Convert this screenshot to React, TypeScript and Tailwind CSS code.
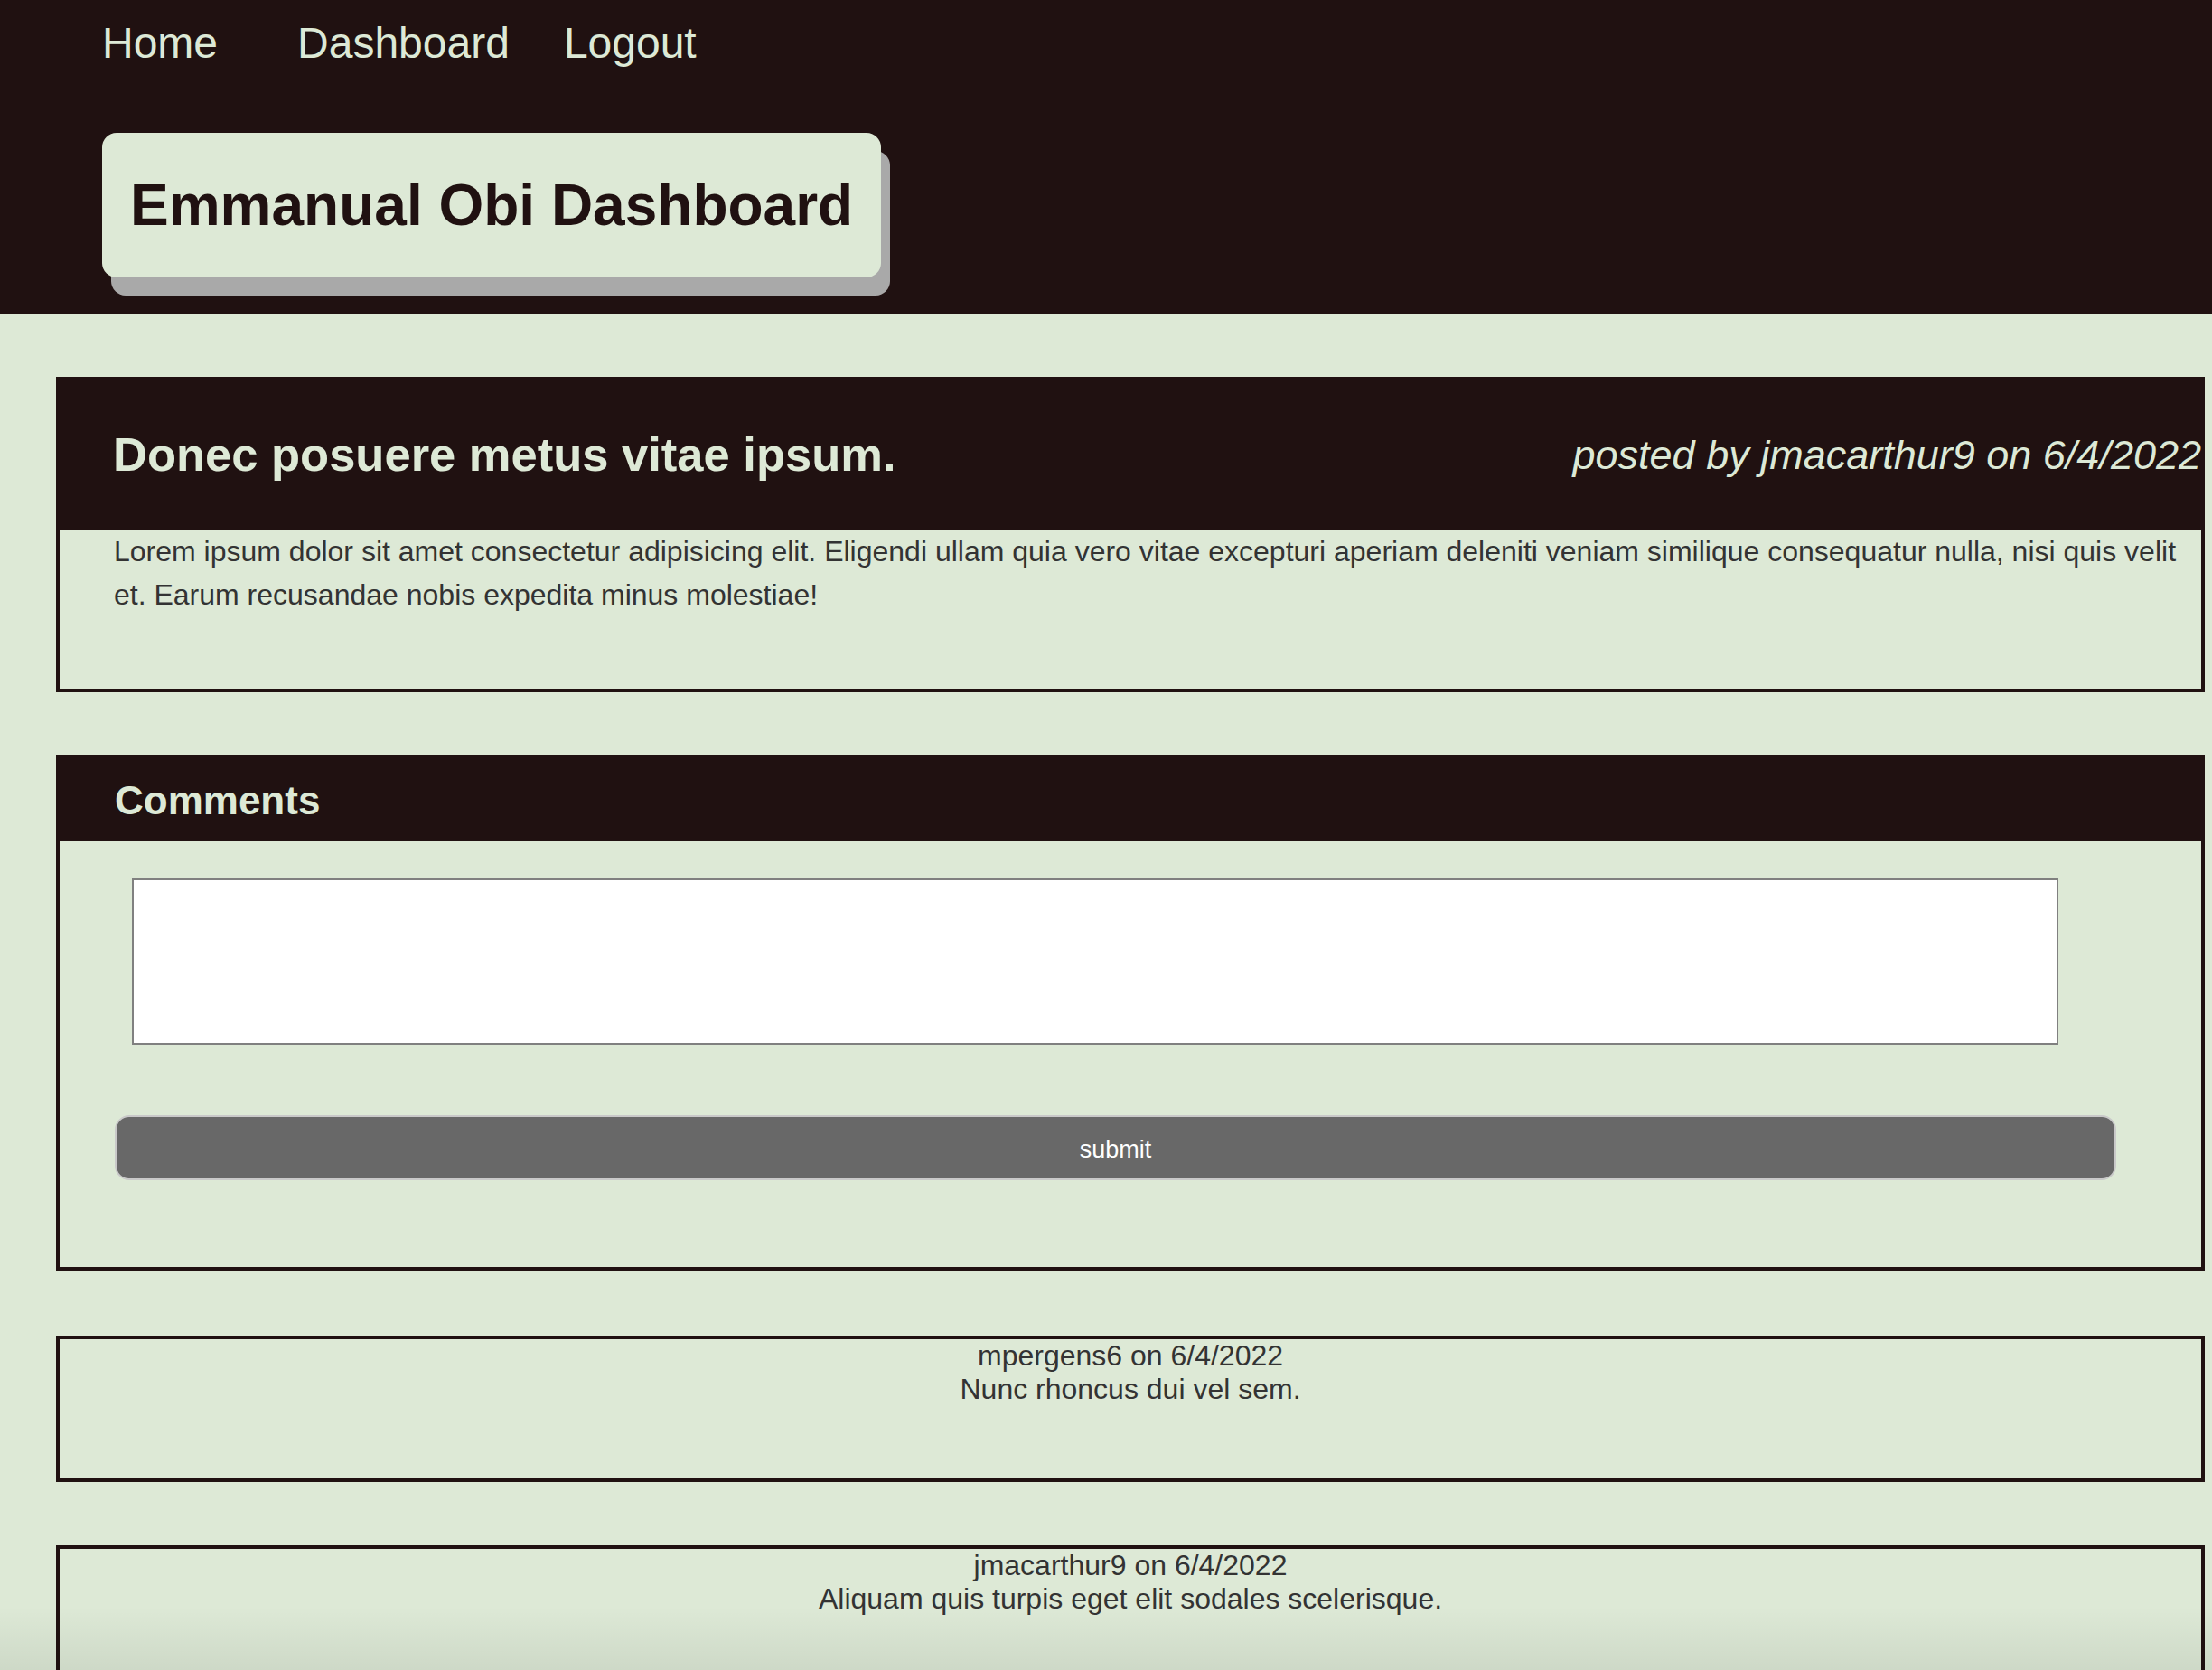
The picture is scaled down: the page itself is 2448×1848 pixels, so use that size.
export default function App() {
  return (
    <div className="relative h-[1848px] overflow-hidden bg-[#dde9d6] font-['Liberation_Sans',Arial,sans-serif]">
      <header className="h-[347px] bg-[#201111] pl-[113px] pt-[20px]">
        <nav className="flex text-[48px] leading-[55px] text-[#dde9d6]">
          <a href="#" className="mr-[88px]">
            Home
          </a>
          <a href="#" className="mr-[60px]">
            Dashboard
          </a>
          <a href="#">Logout</a>
        </nav>
        <div className="mt-[72px] flex h-[160px] w-fit items-center rounded-[16px] bg-[#dde9d6] px-[31px] shadow-[10px_20px_0_#a9a9a9]">
          <h1 className="text-[64px] font-bold leading-none text-[#201111]">
            Emmanual Obi Dashboard
          </h1>
        </div>
      </header>

      <main className="pt-[70px]">
        <section className="ml-[62px] mr-[8px] border-4 border-[#201111]">
          <div className="flex h-[165px] items-center justify-between bg-[#201111] pl-[59px] text-[#dde9d6]">
            <h2 className="text-[52.5px] font-bold leading-none">
              Donec posuere metus vitae ipsum.
            </h2>
            <p className="text-[45px] italic leading-none">
              posted by jmacarthur9 on 6/4/2022
            </p>
          </div>
          <p className="pb-[80px] pl-[60px] pr-[20px] text-[32px] leading-[48px] text-[#333]">
            Lorem ipsum dolor sit amet consectetur adipisicing elit. Eligendi
            ullam quia vero vitae excepturi aperiam deleniti veniam similique
            consequatur nulla, nisi quis velit et. Earum recusandae nobis
            expedita minus molestiae!
          </p>
        </section>

        <section className="ml-[62px] mr-[8px] mt-[70px] border-4 border-[#201111]">
          <div className="flex h-[91px] items-center bg-[#201111] pl-[61px]">
            <h3 className="text-[44px] font-bold leading-none text-[#dde9d6]">
              Comments
            </h3>
          </div>
          <form className="pb-[96px] pt-[41px]">
            <textarea className="ml-[80px] block h-[184px] w-[2132px] resize-none border-2 border-[#808080] bg-white" />
            <button
              type="button"
              className="ml-[61px] mt-[78px] block h-[72px] w-[2215px] rounded-[16px] border-2 border-[#c9c9c9] bg-[#686868] pt-[4px] text-[27px] text-white"
            >
              submit
            </button>
          </form>
        </section>

        <div className="ml-[62px] mr-[8px] mt-[72px] border-4 border-[#201111] pb-[80px] text-center text-[32px] leading-[37px] text-[#333]">
          <p>mpergens6 on 6/4/2022</p>
          <p>Nunc rhoncus dui vel sem.</p>
        </div>

        <div className="ml-[62px] mr-[8px] mt-[70px] border-4 border-[#201111] pb-[80px] text-center text-[32px] leading-[37px] text-[#333]">
          <p>jmacarthur9 on 6/4/2022</p>
          <p>Aliquam quis turpis eget elit sodales scelerisque.</p>
        </div>
      </main>

      <div className="pointer-events-none absolute inset-x-0 bottom-0 h-[70px] bg-linear-to-b from-transparent to-black/[0.07]" />
    </div>
  );
}
